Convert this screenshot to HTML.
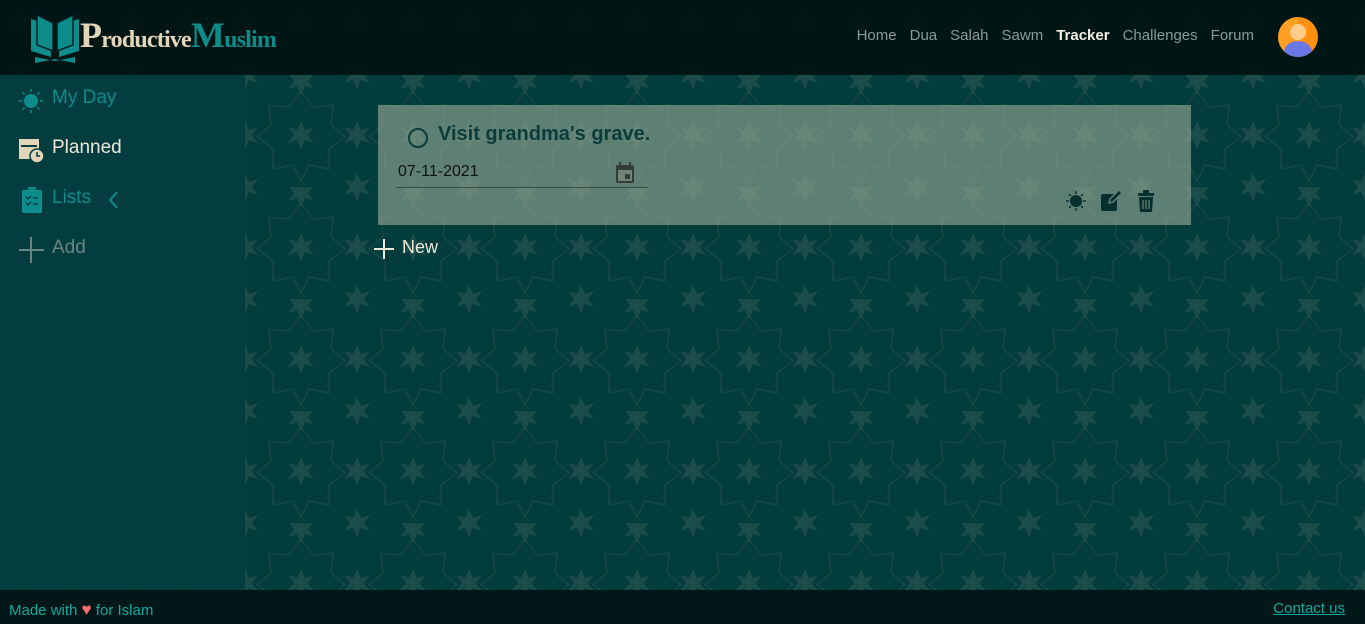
<!DOCTYPE html>
<html><head><meta charset="utf-8"><style>
*{margin:0;padding:0;box-sizing:border-box}
body{width:1365px;height:624px;overflow:hidden;background:#033c3c;font-family:"Liberation Sans",sans-serif;position:relative}
.bg{position:absolute;left:0;top:0;width:1365px;height:624px}
header{position:absolute;left:0;top:0;width:1365px;height:75px;background:rgba(2,18,18,.93)}
.side{position:absolute;left:0;top:75px;width:245px;height:515px;background:#033d40}
footer{position:absolute;left:0;top:590px;width:1365px;height:34px;background:rgba(2,22,22,.95)}
.logo{position:absolute;left:80px;top:14px;font-family:"Liberation Serif",serif;font-weight:bold;font-size:24px;color:#e3d6b8;letter-spacing:-0.8px}
.logo .big{font-size:36px}
.logo .m{color:#0e8c8c}
nav{position:absolute;top:27px;right:111px;font-family:"Liberation Sans Narrow","Liberation Sans",sans-serif;font-size:15px;color:#8a9a9a}
nav span{margin-left:13px}
nav .a{color:#f2efe6;font-weight:bold}
.av{position:absolute;left:1278px;top:17px;width:40px;height:40px;border-radius:50%;background:linear-gradient(90deg,#ffa023 50%,#ff9010 50%);overflow:hidden}
.item{position:absolute;left:52px;font-size:19px;font-family:"Liberation Sans Narrow","Liberation Sans",sans-serif}
.card{position:absolute;left:378px;top:105px;width:813px;height:120px;background:rgba(150,170,150,.62)}
</style></head><body>
<svg class="bg" width="1365" height="624">
<defs>
<g id="fl" fill="#1b4c49"><path d="M0,-14 L4,-5 L13,-8 L7,0 L13,8 L4,5 L0,14 L-4,5 L-13,8 L-7,0 L-13,-8 L-4,-5Z"/><circle r="4"/></g>
<pattern id="p" width="112" height="112" patternUnits="userSpaceOnUse" x="245" y="75">
<g fill="none" stroke="#164744" stroke-width="1.5">
<polygon points="56,16 68,32 88,30 86,50 100,62 84,74 84,94 64,90 56,106 48,90 28,94 28,74 12,62 26,50 24,30 44,32"/>
</g>
<use href="#fl" x="56" y="60"/>
<use href="#fl" x="0" y="0"/><use href="#fl" x="112" y="0"/><use href="#fl" x="0" y="112"/><use href="#fl" x="112" y="112"/>
<use href="#fl" x="56" y="6" transform="scale(1)"/>
<use href="#fl" x="0" y="60"/><use href="#fl" x="112" y="60"/>
</pattern></defs>
<rect width="1365" height="624" fill="#033c3c"/>
<rect width="1365" height="624" fill="url(#p)"/>
</svg>
<header>
<svg style="position:absolute;left:29px;top:11px" width="52" height="52" viewBox="0 0 52 52"><path d="M2,8 V40 L22,46 V14 Z M50,8 V40 L30,46 V14Z" fill="#0e8c8c"/><path d="M8,4 L24,12 V40 L8,34Z M44,4 L28,12 V40 L44,34Z" fill="#0e8c8c" stroke="#022" stroke-width="1.5"/><path d="M6,46 L26,50 L46,46 V52 L26,48 L6,52Z" fill="#0e8c8c"/></svg>
<div class="logo"><span class="big">P</span>roductive<span class="m"><span class="big">M</span>uslim</span></div>
<nav><span>Home</span><span>Dua</span><span>Salah</span><span>Sawm</span><span class="a">Tracker</span><span>Challenges</span><span>Forum</span></nav>
<div class="av"><div style="position:absolute;left:12px;top:7px;width:16px;height:16px;border-radius:50%;background:#ffcf8a"></div><div style="position:absolute;left:6px;top:24px;width:28px;height:22px;border-radius:50% 50% 0 0;background:#6a78e6"></div></div>
</header>
<div class="side">
<svg style="position:absolute;left:19px;top:14px" width="24" height="24" viewBox="0 0 24 24"><circle cx="12" cy="12" r="7" fill="#0e8c8c"/><g stroke="#0e8c8c" stroke-width="1.5"><path d="M12 0v3M12 21v3M0 12h3M21 12h3M3.5 3.5l2 2M18.5 18.5l2 2M3.5 20.5l2-2M18.5 5.5l2-2"/></g></svg>
<div class="item" style="top:12px;color:#0e8c8c">My Day</div>
<svg style="position:absolute;left:19px;top:62px" width="26" height="26" viewBox="0 0 26 26"><rect x="0" y="2" width="20" height="20" fill="#e3d6b8"/><rect x="2" y="8" width="16" height="2" fill="#033d40"/><circle cx="18" cy="19" r="7" fill="#e3d6b8" stroke="#033d40" stroke-width="1.5"/><path d="M18 15v4h3" stroke="#033d40" stroke-width="1.5" fill="none"/></svg>
<div class="item" style="top:62px;color:#eee7d8">Planned</div>
<svg style="position:absolute;left:22px;top:112px" width="20" height="26" viewBox="0 0 20 26"><rect x="0" y="3" width="20" height="23" rx="1" fill="#0e8c8c"/><rect x="6" y="0" width="8" height="5" rx="1" fill="#0e8c8c"/><path d="M4 10l2 2 3-3M4 16l2 2 3-3M11 11h5M11 17h5" stroke="#033d40" stroke-width="1.5" fill="none"/></svg>
<div class="item" style="top:112px;color:#0e8c8c">Lists</div>
<svg style="position:absolute;left:107px;top:115px" width="12" height="20"><path d="M10 2L3 10l7 8" stroke="#0e8c8c" stroke-width="2" fill="none"/></svg>
<svg style="position:absolute;left:19px;top:162px" width="26" height="26"><path d="M12 0v26M0 13h25" stroke="#6b8482" stroke-width="2"/></svg>
<div class="item" style="top:162px;color:#6b8482">Add</div>
</div>
<div class="card">
<svg style="position:absolute;left:30px;top:22px" width="22" height="22"><circle cx="10" cy="11" r="9" fill="none" stroke="#0a3c3c" stroke-width="2"/></svg>
<div style="position:absolute;left:60px;top:18px;font-size:20px;color:#0a3c3c;font-weight:bold;font-family:'Liberation Sans Narrow','Liberation Sans',sans-serif">Visit grandma's grave.</div>
<div style="position:absolute;left:20px;top:58px;font-size:16px;color:#111">07-11-2021</div>
<svg style="position:absolute;left:237px;top:57px" width="20" height="22" viewBox="0 0 20 22"><rect x="1" y="3" width="18" height="18" rx="2" fill="#333d38"/><rect x="3" y="8" width="14" height="11" fill="#6f8474"/><rect x="10" y="12" width="5" height="5" fill="#333d38"/><rect x="4" y="0" width="2" height="4" fill="#333d38"/><rect x="14" y="0" width="2" height="4" fill="#333d38"/></svg>
<div style="position:absolute;left:18px;top:82px;width:252px;height:1px;background:#3a4a40"></div>
<svg style="position:absolute;left:688px;top:86px" width="20" height="20" viewBox="0 0 20 20"><circle cx="10" cy="10" r="6" fill="#063030"/><path d="M10 0v3M10 17v3M0 10h3M17 10h3M3 3l2 2M15 15l2 2M3 17l2-2M15 5l2-2" stroke="#063030" stroke-width="1.4"/></svg>
<svg style="position:absolute;left:722px;top:85px" width="22" height="22" viewBox="0 0 22 22"><rect x="1" y="4" width="16" height="17" rx="2" fill="#063030"/><path d="M9 13l1-4 9-9 3 3-9 9z" fill="#063030" stroke="#6f8474" stroke-width="1.3"/></svg>
<svg style="position:absolute;left:758px;top:85px" width="20" height="22" viewBox="0 0 20 22"><rect x="2" y="3" width="16" height="3" fill="#063030"/><rect x="7" y="0" width="6" height="3" fill="#063030"/><path d="M3 7h14l-1 15H4z" fill="#063030"/><path d="M7 10v9M10 10v9M13 10v9" stroke="#6f8474" stroke-width="1.2"/></svg>
</div>
<svg style="position:absolute;left:374px;top:239px" width="20" height="20"><path d="M10 0v20M0 10h20" stroke="#eee7d8" stroke-width="2"/></svg>
<div style="position:absolute;left:402px;top:237px;font-size:18px;color:#eee7d8;font-family:'Liberation Sans Narrow','Liberation Sans',sans-serif">New</div>
<footer>
<div style="position:absolute;left:9px;top:10px;font-size:15px;color:#12a7a0;font-family:'Liberation Sans Narrow','Liberation Sans',sans-serif">Made with <span style="color:#ff6b6b;font-size:17px">♥</span> for Islam</div>
<div style="position:absolute;right:20px;top:10px;font-size:15px;color:#12a7a0;text-decoration:underline">Contact us</div>
</footer>
</body></html>
